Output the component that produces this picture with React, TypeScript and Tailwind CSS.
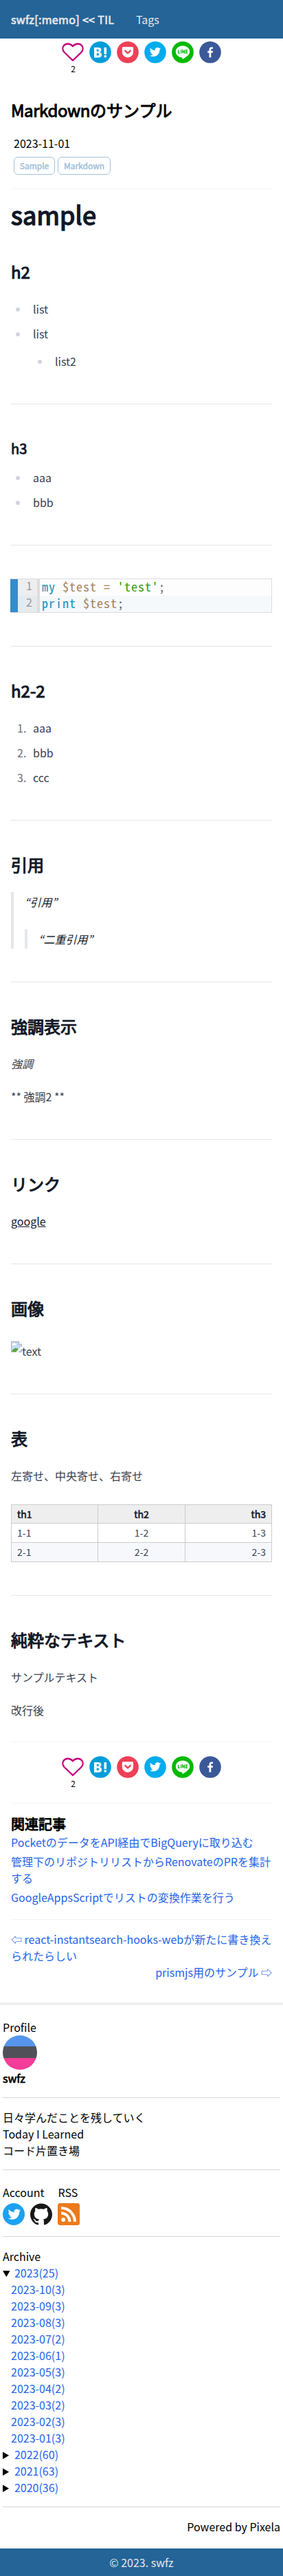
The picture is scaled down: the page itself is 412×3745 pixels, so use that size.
import React from "react";

const Hr = () => <hr className="my-12 border-t border-[#e5e7eb]" />;
const H2 = ({ children }: { children: React.ReactNode }) => (
  <h2 className="mb-6 text-2xl leading-8 text-[#111827] [-webkit-text-stroke:1.1px]">{children}</h2>
);

const Heart = () => (
  <svg viewBox="0 0 32 28" className="h-7 w-8">
    <path d="M16 5.2C12.5.9 6.3.7 3.300 3.800.500 7 1 11.200 3.600 14L16 26 28.400 14C31 11.200 31.500 7 28.700 3.800 25.700.7 19.500.9 16 5.200Z" fill="none" stroke="#c5007b" strokeWidth="2.4" strokeLinejoin="round" />
  </svg>
);

const TWITTER =
  "M23.953 4.57a10 10 0 01-2.825.775 4.958 4.958 0 002.163-2.723c-.951.555-2.005.959-3.127 1.184a4.92 4.92 0 00-8.384 4.482C7.69 8.095 4.067 6.13 1.64 3.162a4.822 4.822 0 00-.666 2.475c0 1.71.87 3.213 2.188 4.096a4.904 4.904 0 01-2.228-.616v.06a4.923 4.923 0 003.946 4.827 4.996 4.996 0 01-2.212.085 4.936 4.936 0 004.604 3.417 9.867 9.867 0 01-6.102 2.105c-.39 0-.779-.023-1.17-.067a13.995 13.995 0 007.557 2.209c9.053 0 13.998-7.496 13.998-13.985 0-.21 0-.42-.015-.63A9.935 9.935 0 0024 4.59z";

const Share = () => (
  <div className="flex h-[52px] justify-center gap-2">
    <div className="flex w-8 flex-col items-center">
      <div className="flex h-8 items-center">
        <Heart />
      </div>
      <span className="pl-px text-xs leading-4">2</span>
    </div>
    <svg viewBox="0 0 32 32" className="size-8">
      <circle cx="16" cy="16" r="15.800" fill="#009dda" />
      <path fillRule="evenodd" fill="#fff" d="M7 9h5.500c3.500 0 5 1.300 5 3.600 0 1.800-1 2.900-2.700 3.200 2.200.3 3.400 1.500 3.400 3.600 0 2.900-2 4.300-5.700 4.300H7zm3.800 2.800v3h1.100c1.300 0 1.900-.500 1.900-1.500s-.6-1.500-1.900-1.500zm0 5.600v3.400h1.400c1.400 0 2.100-.6 2.100-1.700s-.7-1.700-2.100-1.700zM21.500 9h3.600v9.700h-3.600zM23.300 19.900a1.950 1.950 0 1 0 .01 0z" />
    </svg>
    <svg viewBox="0 0 32 32" className="size-8">
      <circle cx="16" cy="16" r="15.800" fill="#ee4056" />
      <path d="M9.500 8.200h12.900c1 0 1.700.7 1.700 1.700v5.700a8.050 8.050 0 0 1-16.300 0V9.900c0-1 .7-1.700 1.700-1.700z" fill="#fff" />
      <path d="M12.300 13.800 16 17.300l3.700-3.500" fill="none" stroke="#ee4056" strokeWidth="2.300" strokeLinecap="round" strokeLinejoin="round" />
    </svg>
    <svg viewBox="0 0 32 32" className="size-8">
      <circle cx="16" cy="16" r="15.800" fill="#00aced" />
      <path transform="translate(7.800 7.500) scale(.68)" d={TWITTER} fill="#fff" />
    </svg>
    <svg viewBox="0 0 32 32" className="size-8">
      <circle cx="16" cy="16" r="15.800" fill="#00b900" />
      <path d="M16 6.600c5.700 0 10.200 3.700 10.200 8.300 0 2.500-1.200 4.300-3.200 6.200-2 2-5.800 4.400-6.900 4.800-.9.300-.8-.2-.7-.6.100-.7.300-1.700-.4-1.900C9.700 23 5.800 19.400 5.800 14.900c0-4.600 4.500-8.300 10.200-8.300z" fill="#fff" />
      <path d="M9.600 12.700v4.500h2.600M13.800 12.300v5.300M15.900 17.600v-4.600l2.700 4v-4.700M23.200 12.900h-2.400v4.200h2.400M20.800 15h2.200" fill="none" stroke="#00b900" strokeWidth="1.200" />
    </svg>
    <svg viewBox="0 0 32 32" className="size-8">
      <circle cx="16" cy="16" r="15.800" fill="#3b5998" />
      <path d="M17.300 23.500v-6.800h2.300l.4-2.700h-2.700v-1.700c0-.8.300-1.300 1.400-1.300H20V8.600c-.3 0-1.100-.1-2-.1-2.100 0-3.500 1.300-3.500 3.500v2h-2.300v2.700h2.300v6.800z" fill="#fff" />
    </svg>
  </div>
);

const Bullets = ({ items }: { items: string[] }) => (
  <>
    {items.map((t, i) => (
      <li key={i} className="my-2 pl-1.5">{t}</li>
    ))}
  </>
);

const BrokenImage = () => (
  <svg viewBox="0 0 16 16" className="size-4 shrink-0">
    <path d="M.5.500h11L15.500 4.500v11H.5z" fill="#c6d9f7" stroke="#b0b0b0" />
    <path d="M11.500.500v4h4" fill="#fff" stroke="#b0b0b0" />
    <path d="M3 6a1.500 1.500 0 0 1 0-3h.3a1.500 1.500 0 0 1 2.700.3A1.300 1.300 0 0 1 6.700 6z" fill="#fff" />
    <path d="M1 15c1-3 3.500-5 6-5s4 1 5 5z" fill="#57a83a" />
    <path d="m8.500 16 7.500-7.500" stroke="#fff" strokeWidth="2.500" />
  </svg>
);

const months = ["10(3)", "09(3)", "08(3)", "07(2)", "06(1)", "05(3)", "04(2)", "03(2)", "02(3)", "01(3)"];

export default function App() {
  return (
    <div className="bg-white font-['Noto_Sans_CJK_JP',sans-serif] text-base leading-6 text-black">
      <header className="flex h-14 items-center bg-[#246497] pl-4 text-[#e5e7eb]">
        <span className="w-[150px] whitespace-nowrap tracking-[0.33px] [-webkit-text-stroke:0.7px]">swfz[:memo] &lt;&lt; TIL</span>
        <span className="ml-8">Tags</span>
      </header>
      <main className="px-4">
        <div className="pt-1">
          <Share />
        </div>
        <h1 className="mt-8 text-2xl leading-8 [-webkit-text-stroke:1px]"><span className="tracking-[-0.4px]">Markdown</span>のサンプル</h1>
        <div className="mt-5 px-1 leading-6">2023-11-01</div>
        <div className="mt-2 flex gap-1 px-1 text-xs leading-6 text-[#a3c2db] [-webkit-text-stroke:0.5px]">
          <span className="w-[60px] rounded-md border border-[#a3c2db] text-center">Sample</span>
          <span className="w-[77px] rounded-md border border-[#a3c2db] text-center">Markdown</span>
        </div>
        <hr className="mb-4 mt-5 border-[#f3f4f6]" />
        <article className="leading-7 text-[#374151]">
          <h1 className="mb-12 text-4xl leading-10 tracking-[0.2px] text-[#111827] [-webkit-text-stroke:1.6px]">sample</h1>
          <H2>h2</H2>
          <ul className="list-disc pl-[26px] marker:text-[#d1d5db]">
            <Bullets items={["list"]} />
            <li className="my-2 pl-1.5">
              list
              <ul className="my-3 list-disc pl-[26px]"><Bullets items={["list2"]} /></ul>
            </li>
          </ul>
          <Hr />
          <h3 className="mb-3 text-xl leading-8 text-[#111827] [-webkit-text-stroke:0.9px]">h3</h3>
          <ul className="list-disc pl-[26px] marker:text-[#d1d5db]"><Bullets items={["aaa", "bbb"]} /></ul>
          <Hr />
          <div className="-ml-px flex h-[50px] border-y border-r border-[#ddd]">
            <div className="w-[11px] bg-[#358ccb]" />
            <div className="w-8 border-r-4 border-[#ddd] bg-[#eee] leading-[18px] text-[#999]">
              <div className="pb-1.5 pl-3">1</div>
              <div className="bg-[#e7eaed] pb-1.5 pl-3">2</div>
            </div>
            <pre className="flex-1 bg-[#fdfdfd] font-['Noto_Sans_Mono_CJK_JP','Liberation_Mono',monospace] text-[18px] leading-5 tracking-[1px] text-[#5f6364]">
              <div className="pb-1 pl-[3px]"><span className="text-[#1990b8]">my</span> <span className="text-[#a67f59]">$test =</span> <span className="text-[#2f9c0a]">'test'</span>;</div>
              <div className="bg-[#f5f9fc] pb-1 pl-[3px]"><span className="text-[#1990b8]">print</span> <span className="text-[#a67f59]">$test</span>;</div>
            </pre>
          </div>
          <Hr />
          <H2>h2-2</H2>
          <ol className="list-decimal pl-[26px] marker:text-[#6b7280]"><Bullets items={["aaa", "bbb", "ccc"]} /></ol>
          <Hr />
          <H2>引用</H2>
          <blockquote className="border-l-4 border-[#e5e7eb] pl-4 italic text-[#111827]">
            <p>“引用”</p>
            <blockquote className="mt-[25.6px] border-l-4 border-[#e5e7eb] pl-4"><p>“二重引用”</p></blockquote>
          </blockquote>
          <Hr />
          <H2>強調表示</H2>
          <p className="mb-5 italic">強調</p>
          <p>** 強調2 **</p>
          <Hr />
          <H2>リンク</H2>
          <p><a className="text-[#111827] underline">google</a></p>
          <Hr />
          <H2>画像</H2>
          <p className="my-8 flex items-start"><BrokenImage />text</p>
          <Hr />
          <H2>表</H2>
          <p>左寄せ、中央寄せ、右寄せ</p>
          <table className="my-7 w-full table-fixed border-collapse text-sm leading-6 [&_td]:h-7 [&_td]:border [&_td]:border-[#ccc] [&_td]:px-2 [&_td]:py-0 [&_th]:h-[27px] [&_th]:border [&_th]:border-[#ccc] [&_th]:px-2 [&_th]:py-0 [&_th]:font-normal">
            <thead className="bg-[#eee] text-[#111827] [-webkit-text-stroke:0.6px]">
              <tr><th className="text-left">th1</th><th className="text-center">th2</th><th className="text-right">th3</th></tr>
            </thead>
            <tbody>
              <tr><td>1-1</td><td className="text-center">1-2</td><td className="text-right">1-3</td></tr>
              <tr className="bg-[#f6f8fc]"><td>2-1</td><td className="text-center">2-2</td><td className="text-right">2-3</td></tr>
            </tbody>
          </table>
          <Hr />
          <H2>純粋なテキスト</H2>
          <p className="mb-5">サンプルテキスト</p>
          <p>改行後</p>
        </article>
        <hr className="mb-5 mt-8 border-[#f3f4f6]" />
        <Share />
        <hr className="my-4 border-[#f3f4f6]" />
        <h2 className="text-xl leading-7 [-webkit-text-stroke:0.9px]">関連記事</h2>
        <div className="flex flex-col gap-1 text-[#2563eb]">
          <a>PocketのデータをAPI経由でBigQueryに取り込む</a>
          <a>管理下のリポジトリリストからRenovateのPRを集計する</a>
          <a>GoogleAppsScriptでリストの変換作業を行う</a>
        </div>
        <hr className="mb-4 mt-5 border-[#f3f4f6]" />
        <div className="text-[#2563eb]">
          <p>⇦ react-instantsearch-hooks-webが新たに書き換えられたらしい</p>
          <p className="text-right">prismjs用のサンプル ⇨</p>
        </div>
      </main>
      <div className="mt-8 h-1 bg-[#f0f0f0]" />
      <aside className="px-1">
        <p className="mt-5">Profile</p>
        <svg viewBox="0 0 50 50" className="size-[50px] rounded-full"><path d="M0 0h50v17H0z" fill="#5596ec" /><path d="M0 16h50v17H0z" fill="#505058" /><path d="M0 33h50v17H0z" fill="#f43d98" /></svg>
        <p className="[-webkit-text-stroke:0.7px]">swfz</p>
        <hr className="my-4 border-[#d1d5db]" />
        <p>日々学んだことを残していく<br />Today I Learned<br />コード片置き場</p>
        <hr className="my-4 border-[#d1d5db]" />
        <div className="flex gap-5 pt-1">
          <p>Account</p><p>RSS</p>
        </div>
        <div className="mt-1 flex gap-2">
          <svg viewBox="0 0 32 32" className="size-8"><circle cx="16" cy="16" r="16" fill="#1da1f2" /><path transform="translate(7.600 6.900) scale(.77)" d={TWITTER} fill="#fff" /></svg>
          <svg viewBox="0 0 24 24" className="size-8"><path d="M12 .297c-6.630 0-12 5.373-12 12 0 5.303 3.438 9.800 8.205 11.385.6.113.82-.258.82-.577 0-.285-.01-1.040-.015-2.040-3.338.724-4.042-1.610-4.042-1.610C4.422 18.070 3.633 17.700 3.633 17.700c-1.087-.744.084-.729.084-.729 1.205.084 1.838 1.236 1.838 1.236 1.070 1.835 2.809 1.305 3.495.998.108-.776.417-1.305.76-1.605-2.665-.3-5.466-1.332-5.466-5.930 0-1.310.465-2.380 1.235-3.220-.135-.303-.54-1.523.105-3.176 0 0 1.005-.322 3.300 1.230.96-.267 1.980-.399 3-.405 1.020.006 2.040.138 3 .405 2.280-1.552 3.285-1.230 3.285-1.230.645 1.653.24 2.873.12 3.176.765.840 1.230 1.910 1.230 3.220 0 4.610-2.805 5.625-5.475 5.920.42.360.81 1.096.81 2.220 0 1.606-.015 2.896-.015 3.286 0 .315.21.690.825.570C20.565 22.092 24 17.592 24 12.297c0-6.627-5.373-12-12-12" fill="#191717" /></svg>
          <svg viewBox="0 0 32 32" className="size-8"><rect width="32" height="32" rx="3.500" fill="#ec7a1c" /><circle cx="8.200" cy="24" r="3" fill="#fff" /><path d="M5 14.500A12.500 12.500 0 0 1 17.500 27M5 7a20 20 0 0 1 20 20" fill="none" stroke="#fff" strokeWidth="4" /></svg>
        </div>
        <hr className="my-4 border-[#d1d5db]" />
        <p>Archive</p>
        <details open><summary><a className="text-[#2563eb]">2023(25)</a></summary>
          <div className="pl-3 text-[#2563eb]">{months.map((m) => <p key={m}>2023-{m}</p>)}</div>
        </details>
        {["2022(60)", "2021(63)", "2020(36)"].map((y) => <details key={y}><summary><a className="text-[#2563eb]">{y}</a></summary></details>)}
        <hr className="my-4 border-[#d1d5db]" />
        <p className="text-right">Powered by Pixela</p>
      </aside>
      <footer className="mt-5 flex h-10 items-center justify-center bg-[#246497] text-[#e5e7eb]">© 2023. swfz</footer>
    </div>
  );
}
